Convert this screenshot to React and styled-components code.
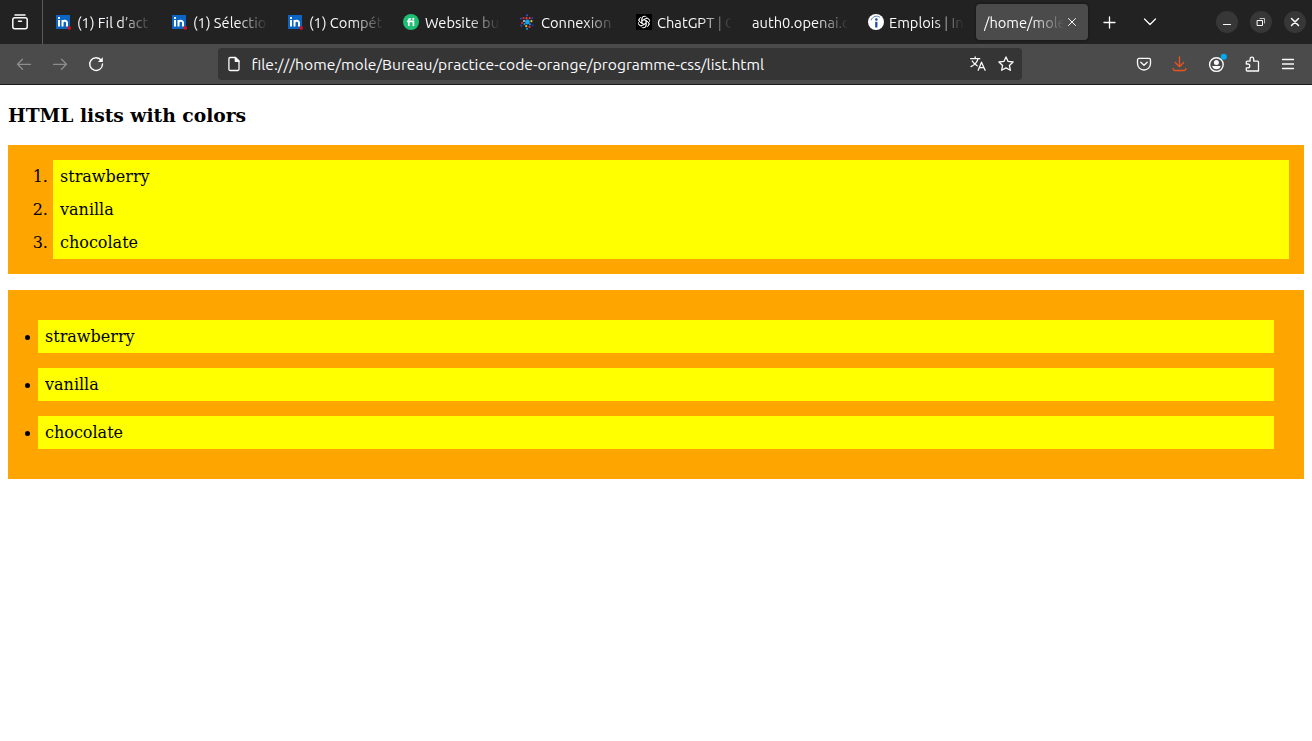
import React from "react";
import styled, { createGlobalStyle, css } from "styled-components";

const GlobalStyle = createGlobalStyle`
  html, body { margin: 0; padding: 0; background: #fff; }
  body { overflow: hidden; }
  svg { display: block; flex: none; overflow: visible; }
`;

const Chrome = styled.header`
  font-family: Ubuntu, "Noto Sans", "Open Sans", sans-serif;
  font-size: 14.67px;
  color: #fbfbfe;
`;

const TabStrip = styled.div`
  display: flex;
  align-items: center;
  height: 44px;
  background: #222222;
`;

const ViewButton = styled.div`
  display: flex;
  align-items: center;
  justify-content: center;
  box-sizing: border-box;
  width: 43px;
  height: 44px;
  padding-right: 3px;
  border-right: 1px solid #5b5b5b;
`;

const Tabs = styled.div`
  display: flex;
  gap: 4px;
  margin-left: 5px;
`;

const Tab = styled.div`
  display: flex;
  align-items: center;
  box-sizing: border-box;
  width: 112px;
  height: 36px;
  padding: 0 8px;
  border-radius: 4px;
  ${({ $active }) => $active && css`
    background: #4b4b4b;
    box-shadow: 0 0 3px rgba(0, 0, 0, 0.5);
  `}
`;

const Favicon = styled.span`
  width: 16px;
  height: 16px;
  margin-right: 5px;
`;

const TabLabel = styled.span`
  flex: 1;
  min-width: 0;
  overflow: hidden;
  white-space: nowrap;
  line-height: 24px;
  padding-top: 1px;
  mask-image: linear-gradient(to left, transparent 0, #000 32px);
`;

const CloseTab = styled.span`
  display: flex;
  justify-content: center;
  width: 16px;
`;

const StripButtons = styled.div`
  display: flex;
  align-items: center;
  gap: 25px;
  margin-left: 13px;
`;

const WindowControls = styled.div`
  display: flex;
  gap: 12px;
  margin-left: auto;
  margin-right: 6px;
`;

const WindowButton = styled.span`
  display: flex;
  align-items: center;
  justify-content: center;
  width: 22px;
  height: 22px;
  border-radius: 50%;
  background: #373737;
`;

const NavBar = styled.div`
  display: flex;
  align-items: center;
  box-sizing: border-box;
  height: 41px;
  padding: 0 16px;
  background: #4b4b4b;
  border-bottom: 1px solid #1c1b1d;
`;

const NavGroup = styled.div`
  display: flex;
  align-items: center;
  gap: 20px;
`;

const AddressBar = styled.div`
  display: flex;
  align-items: center;
  box-sizing: border-box;
  width: 804px;
  height: 32px;
  margin-left: 114px;
  padding: 0 8px;
  border-radius: 4px;
  background: #353535;
`;

const Url = styled.span`
  flex: 1;
  margin-left: 9.5px;
  font-size: 15.64px;
  line-height: 24px;
  white-space: nowrap;
`;

const BarIcons = styled.div`
  display: flex;
  gap: 12px;
`;

const ToolIcons = styled(NavGroup)`
  margin-left: auto;
`;

const Page = styled.main`
  padding: 0 8px;
  font-family: "DejaVu Serif", serif;
  font-size: 16px;
  line-height: 19px;
  color: #000;
`;

const Heading = styled.h3`
  margin: 0;
  padding: 19px 0;
  font-size: 18.72px;
  line-height: 22px;
`;

const listBox = css`
  margin: 0 0 16px;
  padding: 15px;
  background: orange;
`;

const OrderedList = styled.ol`
  ${listBox}
`;

const BulletList = styled.ul`
  ${listBox}
  list-style: none;
`;

const Item = styled.li`
  padding: 7px;
  background: yellow;
`;

const NumberedItem = styled(Item)`
  margin-left: 30px;
`;

const BulletItem = styled(Item)`
  position: relative;
  margin: 15px;

  &::before {
    content: "";
    position: absolute;
    top: 14.5px;
    left: -13.4px;
    width: 5.6px;
    height: 5.6px;
    border-radius: 50%;
    background: #000;
  }
`;

const Icon = ({ size = 16, color = "#fbfbfe", width = 1.3, children }) => (
  <svg width={size} height={size} viewBox="0 0 16 16" fill="none" stroke={color} strokeWidth={width} strokeLinecap="round" strokeLinejoin="round">
    {children}
  </svg>
);

const LinkedIn = () => (
  <svg width="16" height="16" viewBox="0 0 16 16">
    <rect y="1" width="14" height="14" fill="#0a66c2" />
    <g stroke="#fff" strokeWidth="2" fill="none">
      <path d="M3 6v6.5M6.5 6v6.5M6.5 9.2C6.5 6.2 11 6 11 9v3.5" />
    </g>
    <rect x="2" y="3" width="2" height="2" fill="#fff" />
    <circle cx="13.2" cy="13.9" r="1.9" fill="#d11124" />
  </svg>
);

const Fiverr = () => (
  <svg width="16" height="16" viewBox="0 0 16 16">
    <circle cx="7" cy="8" r="8" fill="#1dbf73" />
    <path d="M4.8 12V6.2Q4.8 4.6 7 4.9M3 7.4h6.4V12" fill="none" stroke="#fff" strokeWidth="1.7" />
    <circle cx="9.3" cy="4.9" r="1.1" fill="#fff" />
  </svg>
);

const DOTS = [
  [8, 1.3, "#2f55c9"], [7.5, 4.2, "#e84444"], [10.7, 4.2, "#eb3349"], [13.2, 4.2, "#263da8"],
  [4.6, 4.2, "#db2a32"], [2, 4.6, "#2e46af"], [5, 7, "#d3bfdb"], [12.4, 7.2, "#f2cb29"],
  [3.1, 8.9, "#d9242e"], [5.5, 10, "#12a4e8"], [2.2, 11.7, "#2947b1"], [7.2, 12.1, "#f0c52c"],
  [11, 10.3, "#168fdf"], [13.5, 11.4, "#2a34a0"], [10.5, 12.9, "#e33243"], [8, 14.8, "#258bd2"],
];

const Molecule = () => (
  <svg width="16" height="16" viewBox="0 0 16 16">
    <g transform="translate(-1 0)">
      <circle cx="8.4" cy="8" r="2.4" fill="#14a6ee" />
      {DOTS.map(([x, y, fill]) => <circle key={`${x}-${y}`} cx={x} cy={y} r="1.1" fill={fill} />)}
    </g>
  </svg>
);

const OpenAI = () => (
  <svg width="16" height="16" viewBox="0 0 16 16">
    <rect width="16" height="16" fill="#000" />
    <g fill="none" stroke="#fff" strokeWidth=".8" strokeLinejoin="round">
      {[0, 60, 120, 180, 240, 300].map((a) => (
        <path key={a} transform={`rotate(${a} 8 8)`} d="M6 9.2V4.8a2.6 2.6 0 0 1 4.6-1.6M6 6.6l3.6-2.1a2.6 2.6 0 0 1 3.6 1.1" />
      ))}
    </g>
  </svg>
);

const Indeed = () => (
  <svg width="16" height="16" viewBox="0 0 16 16">
    <circle cx="8" cy="8" r="8" fill="#fff" />
    <path d="M3 6.3C4.8 2.2 8.7 1 12 3.4" fill="none" stroke="#1648a8" strokeWidth=".7" />
    <circle cx="8.4" cy="5.5" r="1.3" fill="#1648a8" />
    <path d="M8.3 7.8v5.7" stroke="#1648a8" strokeWidth="2.2" />
  </svg>
);

const TABS = [
  { icon: LinkedIn, label: "(1) Fil d’act" },
  { icon: LinkedIn, label: "(1) Sélectio" },
  { icon: LinkedIn, label: "(1) Compét" },
  { icon: Fiverr, label: "Website bu" },
  { icon: Molecule, label: "Connexion" },
  { icon: OpenAI, label: "ChatGPT | C" },
  { label: "auth0.openai.c" },
  { icon: Indeed, label: "Emplois | In" },
  { label: "/home/mole", active: true },
];

const FLAVOURS = ["strawberry", "vanilla", "chocolate"];

export default function App() {
  return (
    <>
      <GlobalStyle />
      <Chrome>
        <TabStrip>
          <ViewButton>
            <Icon width={1.5}><path d="M3 .9h10" /><rect x=".8" y="3.8" width="14.4" height="11" rx="2" /><path d="M6.5 7.3h3" /></Icon>
          </ViewButton>
          <Tabs>
            {TABS.map(({ icon: Glyph, label, active }) => (
              <Tab key={label} $active={active}>
                {Glyph && <Favicon><Glyph /></Favicon>}
                <TabLabel>{label}</TabLabel>
                {active && <CloseTab><Icon size={8} width={2}><path d="M1 1l14 14M15 1L1 15" /></Icon></CloseTab>}
              </Tab>
            ))}
          </Tabs>
          <StripButtons>
            <Icon><path d="M8.5 3v11M3 8.5h11" /></Icon>
            <Icon><path d="M2.5 5l5.5 5.5L13.5 5" /></Icon>
          </StripButtons>
          <WindowControls>
            <WindowButton><Icon width={1.2}><path d="M4.5 10.5h7" /></Icon></WindowButton>
            <WindowButton><Icon width={1}><path d="M4.5 6.5h5v5h-5z" /><path d="M7 4.5h4.5V9" opacity=".7" /></Icon></WindowButton>
            <WindowButton><Icon width={1.5}><path d="M4.5 4.5l7 7M11.5 4.5l-7 7" /></Icon></WindowButton>
          </WindowControls>
        </TabStrip>
        <NavBar>
          <NavGroup>
            <Icon color="#8d8d8f"><path d="M14.5 8.3h-13M6.5 3.3l-5 5 5 5" /></Icon>
            <Icon color="#8d8d8f"><path d="M1.5 8.3h13M9.5 3.3l5 5-5 5" /></Icon>
            <Icon width={1.4}><path d="M13.4 4.5A6.4 6.4 0 1 0 14.5 8" /><path d="M14.8 1.2v4.9H9.9z" fill="#fbfbfe" stroke="none" /></Icon>
          </NavGroup>
          <AddressBar>
            <Icon><path d="M4.2 1.5h5.3L13 5v8.2a1.3 1.3 0 0 1-1.3 1.3H4.2a1.3 1.3 0 0 1-1.3-1.3V2.8a1.3 1.3 0 0 1 1.3-1.3z" /><path d="M9.3 1.6v3.7H13z" fill="#fbfbfe" /></Icon>
            <Url>file:///home/mole/Bureau/practice-code-orange/programme-css/list.html</Url>
            <BarIcons>
              <Icon><path d="M.7 2.7h9M5.2.8v1.9M2.2 5c1.4 2.4 3.5 3.8 5 4.8M8 2.9C7 6.4 4.5 9 1 10.6M8.2 14.2l3.3-8 3.6 8M9.4 11.7h4.5" /></Icon>
              <Icon><path d="M8 .9l2.1 4.5 5 .6-3.7 3.4 1 4.9L8 11.9l-4.4 2.4 1-4.9L.9 6l5-.6z" /></Icon>
            </BarIcons>
          </AddressBar>
          <ToolIcons>
            <Icon><path d="M3 2.4h10a1.5 1.5 0 0 1 1.5 1.5v3.6a6.5 6.5 0 0 1-13 0V3.9A1.5 1.5 0 0 1 3 2.4zM4.8 6.3L8 9.3l3.2-3" /></Icon>
            <Icon color="#e95420"><path d="M7.5.8v9.7M3.3 6.5l4.2 4.2 4.2-4.2M1.2 12.5v.5a1.5 1.5 0 0 0 1.5 1.5h9.6a1.5 1.5 0 0 0 1.5-1.5v-.5" /></Icon>
            <svg width="16" height="16" viewBox="0 0 16 16">
              <circle cx="8.4" cy="8.6" r="6.8" fill="none" stroke="#fbfbfe" strokeWidth="1.4" />
              <circle cx="8.4" cy="6.5" r="2.5" fill="#fbfbfe" />
              <path d="M4.2 9.9h8.4c-.5 2.2-2 3.3-4.2 3.3s-3.7-1.1-4.2-3.3z" fill="#fbfbfe" />
              <circle cx="15.8" cy="0.8" r="3" fill="#00adf4" />
            </svg>
            <Icon><path d="M2.3 8V6.1a1 1 0 0 1 1-1h2.8V3a1.8 1.8 0 0 1 3.6 0v2.1h3.8a1 1 0 0 1 1 1V15H3.3a1 1 0 0 1-1-1v-2.1h1.5a1.9 1.9 0 0 0 0-3.9z" /></Icon>
            <Icon><path d="M2.5 3.5h11M2.5 8h11M2.5 12.5h11" /></Icon>
          </ToolIcons>
        </NavBar>
      </Chrome>
      <Page>
        <Heading>HTML lists with colors</Heading>
        <OrderedList>
          {FLAVOURS.map((name) => <NumberedItem key={name}>{name}</NumberedItem>)}
        </OrderedList>
        <BulletList>
          {FLAVOURS.map((name) => <BulletItem key={name}>{name}</BulletItem>)}
        </BulletList>
      </Page>
    </>
  );
}
